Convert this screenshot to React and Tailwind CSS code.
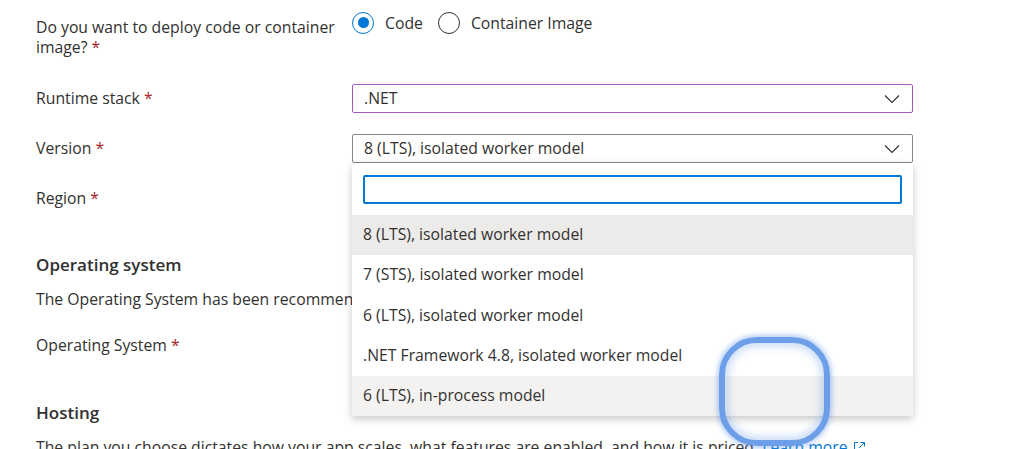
import React from 'react';

const font = { fontFamily: '"Open Sans", "Noto Sans", sans-serif' };

function Req() {
  return <span className="text-[#a4262c]"> *</span>;
}

function Chevron() {
  return (
    <svg width="16" height="10" viewBox="0 0 16 10" className="shrink-0">
      <polyline points="1,1.5 8,8.5 15,1.5" fill="none" stroke="#323130" strokeWidth="1.1" />
    </svg>
  );
}

function Radio({ checked, label }) {
  return (
    <label className="flex items-center gap-[11px]">
      <span
        className={
          checked
            ? 'w-[22px] h-[22px] rounded-full border border-[#0078d4] flex items-center justify-center'
            : 'w-[22px] h-[22px] rounded-full border border-[#323130]'
        }
      >
        {checked && <span className="w-[11px] h-[11px] rounded-full bg-[#0078d4]" />}
      </span>
      <span>{label}</span>
    </label>
  );
}

const versions = [
  { label: '8 (LTS), isolated worker model', bg: 'bg-[#edebe9]' },
  { label: '7 (STS), isolated worker model', bg: 'bg-white' },
  { label: '6 (LTS), isolated worker model', bg: 'bg-white' },
  { label: '.NET Framework 4.8, isolated worker model', bg: 'bg-white' },
  { label: '6 (LTS), in-process model', bg: 'bg-[#f3f2f1]' },
];

export default function App() {
  return (
    <div className="relative w-[1022px] h-[449px] overflow-hidden bg-white text-[#323130] text-[15.75px]" style={font}>
      <div className="pl-[36px] w-[913px]">
        {/* Code or container */}
        <div className="flex">
          <div className="w-[316px] pt-[17px] leading-[20px]">
            Do you want to deploy code or container image?<Req />
          </div>
          <div className="pt-[12px] flex items-center gap-[15px] h-[33px] leading-[20px]">
            <Radio checked label="Code" />
            <Radio label="Container Image" />
          </div>
        </div>

        {/* Runtime stack */}
        <div className="flex items-center h-[29px] mt-[27px]">
          <div className="w-[316px]">Runtime stack<Req /></div>
          <div className="flex-1 h-[29px] border border-[#a259c4] rounded-[2px] flex items-center justify-between pl-[11px] pr-[12px]">
            <span>.NET</span>
            <Chevron />
          </div>
        </div>

        {/* Version */}
        <div className="flex items-center h-[29px] mt-[21px]">
          <div className="w-[316px]">Version<Req /></div>
          <div className="relative flex-1 h-[29px]">
            <div className="h-[29px] border border-[#8a8886] rounded-[2px] flex items-center justify-between pl-[11px] pr-[12px]">
              <span>8 (LTS), isolated worker model</span>
              <Chevron />
            </div>
            <div className="absolute left-0 top-full w-[561px] bg-white z-10 shadow-[0_3px_8px_rgba(0,0,0,0.22)] pt-[12px]">
              <div className="mx-[11px] h-[29px] border-2 border-[#0078d4] rounded-[2px]" />
              <div className="mt-[11px]">
                {versions.map((v) => (
                  <div key={v.label} className={`h-[40.2px] flex items-center pl-[11px] ${v.bg}`}>
                    {v.label}
                  </div>
                ))}
              </div>
            </div>
          </div>
        </div>

        {/* Region */}
        <div className="flex items-center h-[29px] mt-[21px]">
          <div className="w-[316px]">Region<Req /></div>
        </div>

        <h2 className="mt-[40px] text-[17px] leading-[24px] font-semibold">Operating system</h2>
        <p className="mt-[12px] leading-[20px] whitespace-nowrap">
          The Operating System has been recommended for you based on your selection of runtime stack.
        </p>

        <div className="flex items-center h-[29px] mt-[22px]">
          <div className="w-[316px]">Operating System<Req /></div>
        </div>

        <h2 className="mt-[41px] text-[17px] leading-[24px] font-semibold">Hosting</h2>
        <p className="mt-[12px] leading-[20px] whitespace-nowrap">
          The plan you choose dictates how your app scales, what features are enabled, and how it is priced.{' '}
          <span className="text-[#0078d4] inline-flex items-center gap-[5px]">
            Learn more
            <svg width="13" height="13" viewBox="0 0 13 13">
              <path d="M5 1.5H1.5v10h10V8" fill="none" stroke="#0078d4" strokeWidth="1" />
              <path d="M7.5 1.5h4v4M11.5 1.5 6 7" fill="none" stroke="#0078d4" strokeWidth="1" />
            </svg>
          </span>
        </p>
      </div>

      {/* cursor highlight */}
      <div className="absolute left-[719px] top-[337px] w-[111px] h-[109px] rounded-[38px] border-[6px] border-[#6d9fe9] z-20 shadow-[0_0_5px_2px_rgba(90,145,230,0.45),inset_0_0_8px_3px_rgba(90,145,230,0.35)]" />
    </div>
  );
}
